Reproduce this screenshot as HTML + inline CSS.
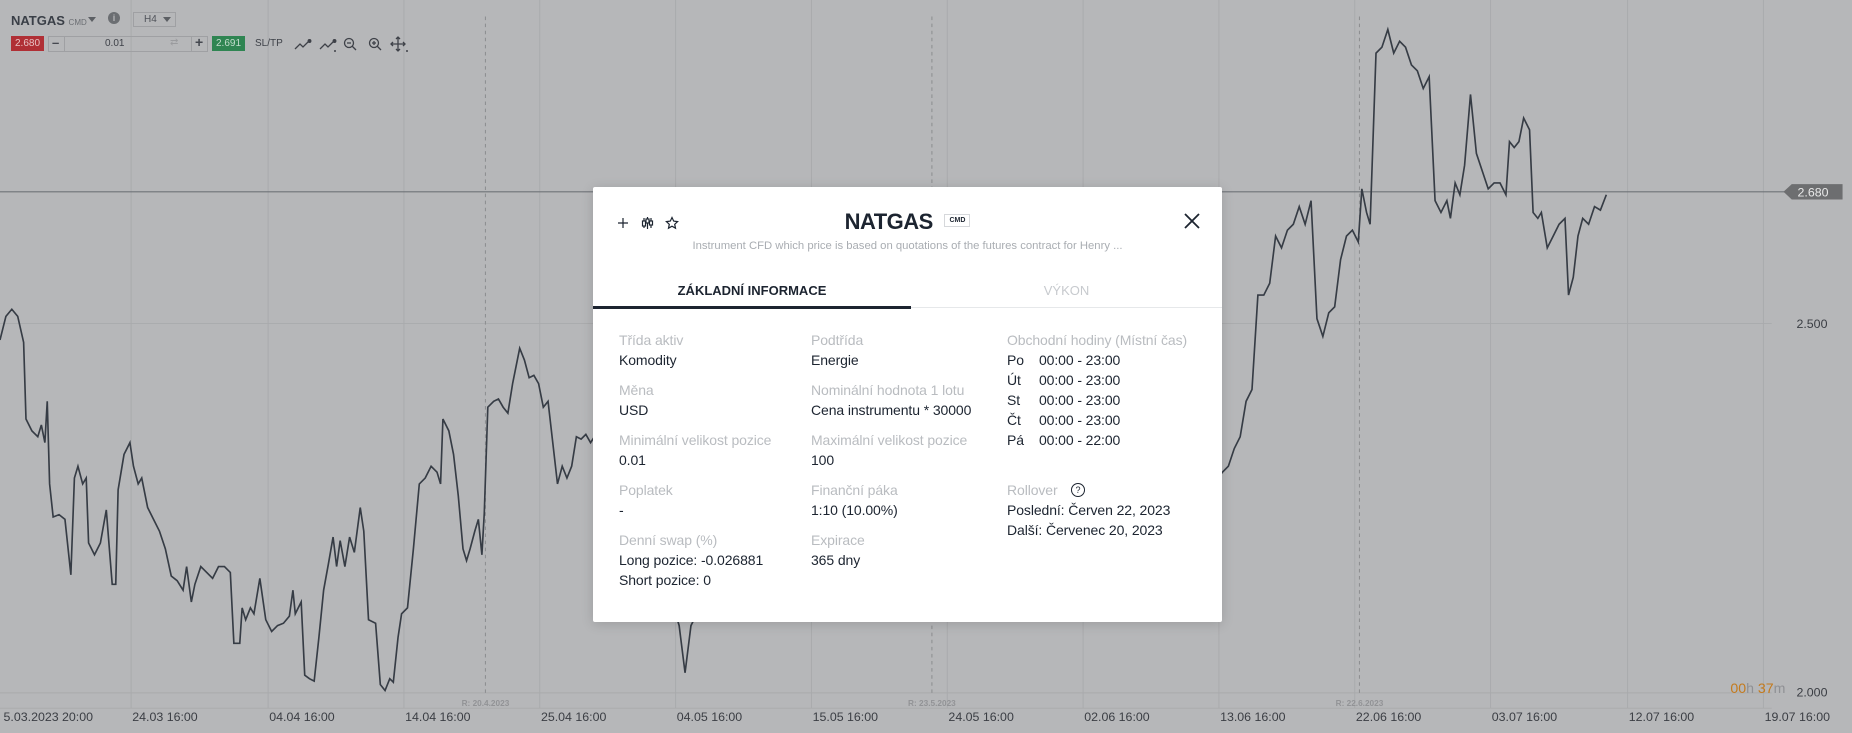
<!DOCTYPE html>
<html><head><meta charset="utf-8"><style>
*{margin:0;padding:0;box-sizing:border-box}
body{width:1852px;height:733px;overflow:hidden;background:#b6b7b9;font-family:"Liberation Sans",sans-serif;position:relative}
.abs{position:absolute}
.modal{position:absolute;left:593px;top:187px;width:629px;height:435px;background:#fff;border-radius:2px;box-shadow:0 2px 12px rgba(0,0,0,.15)}
.lbl{position:absolute;font-size:14px;color:#b9bcc0;white-space:nowrap;letter-spacing:-0.1px}
.val{position:absolute;font-size:14px;color:#1c2430;white-space:nowrap;letter-spacing:-0.1px}
</style></head><body>
<svg class="abs" style="left:0;top:0" width="1852" height="733" viewBox="0 0 1568 621" preserveAspectRatio="none">
<g stroke="#a9aaac" stroke-width="0.8">
<line x1="111" y1="0" x2="111" y2="600"/><line x1="227" y1="0" x2="227" y2="600"/><line x1="342" y1="0" x2="342" y2="600"/><line x1="457" y1="0" x2="457" y2="600"/><line x1="572" y1="0" x2="572" y2="600"/><line x1="687" y1="0" x2="687" y2="600"/><line x1="802" y1="0" x2="802" y2="600"/><line x1="917" y1="0" x2="917" y2="600"/><line x1="1032" y1="0" x2="1032" y2="600"/><line x1="1147" y1="0" x2="1147" y2="600"/><line x1="1262" y1="0" x2="1262" y2="600"/><line x1="1378" y1="0" x2="1378" y2="600"/><line x1="1493" y1="0" x2="1493" y2="600"/>
<line x1="0" y1="587" x2="1500" y2="587"/><line x1="0" y1="600" x2="1500" y2="600"/><line x1="0" y1="274" x2="1500" y2="274"/>
</g>
<g stroke="#8e8f91" stroke-width="0.9" stroke-dasharray="3,3">
<line x1="411" y1="14" x2="411" y2="590"/><line x1="789" y1="14" x2="789" y2="590"/><line x1="1151" y1="14" x2="1151" y2="590"/>
</g>
<line x1="0" y1="162.5" x2="1515" y2="162.5" stroke="#6f7378" stroke-width="0.9"/>
<polygon points="1510,162.5 1517,156 1560,156 1560,169 1517,169" fill="#6d6e70"/>
<text x="1535" y="166.5" font-size="10.5" fill="#e8e8e8" text-anchor="middle" font-family="Liberation Sans">2.680</text>
<polyline fill="none" stroke="#363c45" stroke-width="1.4" points="0,288 5,268 10,262 15,268 20,290 22,355 27,365 32,370 35,360 38,375 40,340 42,410 45,438 50,436 55,440 60,487 63,405 66,395 70,410 73,405 75,460 80,470 85,460 90,432 93,470 95,495 98,495 100,415 105,385 110,375 113,395 117,410 120,405 125,430 130,440 135,450 140,465 145,488 150,492 155,500 158,480 162,510 165,495 170,480 175,485 180,490 185,480 190,480 195,485 198,545 203,545 205,515 208,525 212,515 215,520 220,490 225,525 230,535 235,530 240,528 245,522 248,500 250,520 255,510 258,572 262,575 266,577 270,540 274,500 278,478 282,455 285,480 288,458 292,480 296,455 300,468 305,430 308,450 312,525 318,528 322,580 326,585 330,575 333,578 337,540 340,520 345,515 350,465 355,410 360,405 365,395 370,400 373,410 375,355 380,365 384,385 388,420 392,465 395,475 398,465 402,450 405,440 408,470 410,435 413,345 418,340 422,338 426,345 430,350 434,325 437,310 440,295 444,305 448,320 452,318 456,325 460,345 464,340 468,375 472,410 476,395 480,405 484,395 488,370 492,372 496,368 500,375 510,360 560,480 575,530 580,570 585,530 600,500"/>
<polyline fill="none" stroke="#363c45" stroke-width="1.4" points="1020,420 1035,400 1040,395 1045,380 1050,370 1055,340 1060,330 1065,250 1070,250 1075,240 1080,200 1085,210 1090,195 1095,190 1100,175 1105,190 1110,170 1115,270 1120,285 1125,265 1130,260 1135,220 1140,200 1145,195 1150,205 1153,160 1157,180 1160,190 1165,45 1170,40 1175,25 1180,45 1185,35 1190,40 1195,55 1200,60 1205,75 1210,65 1215,170 1220,180 1225,170 1228,185 1232,155 1236,165 1240,140 1245,80 1250,130 1255,145 1260,160 1265,155 1270,155 1275,165 1278,120 1282,125 1286,120 1290,100 1295,110 1298,180 1302,185 1305,180 1310,210 1315,200 1320,190 1325,185 1328,250 1332,235 1336,200 1340,185 1345,190 1350,175 1355,178 1360,165"/>
<g font-family="Liberation Sans" font-size="10.5" fill="#3b3e44">
<text x="3" y="611">5.03.2023 20:00</text><text x="112" y="611">24.03 16:00</text><text x="228" y="611">04.04 16:00</text><text x="343" y="611">14.04 16:00</text><text x="458" y="611">25.04 16:00</text><text x="573" y="611">04.05 16:00</text><text x="688" y="611">15.05 16:00</text><text x="803" y="611">24.05 16:00</text><text x="918" y="611">02.06 16:00</text><text x="1033" y="611">13.06 16:00</text><text x="1148" y="611">22.06 16:00</text><text x="1263" y="611">03.07 16:00</text><text x="1379" y="611">12.07 16:00</text><text x="1494" y="611">19.07 16:00</text>
<text x="1521" y="278">2.500</text><text x="1521" y="590">2.000</text>
</g>
<g font-family="Liberation Sans" font-size="7" fill="#929396" font-weight="bold" text-anchor="middle">
<text x="411" y="598">R: 20.4.2023</text><text x="789" y="598">R: 23.5.2023</text><text x="1151" y="598">R: 22.6.2023</text>
</g>
<text x="1465" y="587" font-family="Liberation Sans" font-size="12"><tspan fill="#c47a1c">00</tspan><tspan fill="#8f9094">h </tspan><tspan fill="#c47a1c">37</tspan><tspan fill="#8f9094">m</tspan></text>
</svg>

<div class="abs" style="left:11px;top:13px;font-size:13px;font-weight:bold;color:#3a3f47">NATGAS <span style="font-size:8px;font-weight:normal;color:#6b6e73">CMD</span></div>
<div class="abs" style="left:88px;top:17px;width:0;height:0;border-left:4px solid transparent;border-right:4px solid transparent;border-top:5px solid #5c5f64"></div>
<div class="abs" style="left:108px;top:12px;width:12px;height:12px;border-radius:50%;background:#6b6e72;color:#b6b7b9;font-size:9px;font-weight:bold;text-align:center;line-height:12px">i</div>
<div class="abs" style="left:133px;top:12px;width:43px;height:15px;border:1px solid #9fa0a3;font-size:10px;color:#50535a;padding-left:10px;line-height:13px">H4</div>
<div class="abs" style="left:163px;top:17px;width:0;height:0;border-left:4px solid transparent;border-right:4px solid transparent;border-top:5px solid #5c5f64"></div>
<div class="abs" style="left:11px;top:36px;width:33px;height:15px;background:#b02f35;color:#e8c3c5;font-size:10px;text-align:center;line-height:15px">2.680</div>
<div class="abs" style="left:48px;top:36px;width:160px;height:16px;border:1px solid #9fa0a3"></div>
<div class="abs" style="left:64px;top:36px;width:1px;height:16px;background:#9fa0a3"></div>
<div class="abs" style="left:191px;top:36px;width:1px;height:16px;background:#9fa0a3"></div>
<div class="abs" style="left:52px;top:35px;font-size:13px;font-weight:bold;color:#454850">–</div>
<div class="abs" style="left:195px;top:34px;font-size:14px;font-weight:bold;color:#454850">+</div>
<div class="abs" style="left:105px;top:38px;font-size:10px;color:#3e4148">0.01</div>
<div class="abs" style="left:170px;top:37px;font-size:10px;color:#9a9b9e">⇄</div>
<div class="abs" style="left:212px;top:36px;width:33px;height:15px;background:#2f8552;color:#c3dccd;font-size:10px;text-align:center;line-height:15px">2.691</div>
<div class="abs" style="left:255px;top:38px;font-size:10px;color:#3e4148">SL/TP</div>
<svg class="abs" style="left:292px;top:36px" width="120" height="18" viewBox="0 0 120 18" fill="none" stroke="#3e4148" stroke-width="1.3">
<path d="M3 13 L8 8 L11 11 L17 5"/><circle cx="17.5" cy="5" r="1.3" fill="#3e4148"/>
<path d="M28 13 L33 8 L36 11 L42 5"/><circle cx="42.5" cy="5" r="1.3" fill="#3e4148"/><path d="M42 15 h2" stroke-width="1.5"/>
<circle cx="57" cy="7" r="4.5"/><path d="M60 10 L64 14 M55 7 h4"/>
<circle cx="82" cy="7" r="4.5"/><path d="M85 10 L89 14 M80 7 h4 M82 5 v4"/>
<path d="M106 1 v14 M99 8 h14 M104 3 l2-2 2 2 M104 13 l2 2 2-2 M101 6 l-2 2 2 2 M111 6 l2 2-2 2"/><path d="M114 15 h2" stroke-width="1.5"/>
</svg>

<div class="modal">
<svg class="abs" style="left:24px;top:28px" width="70" height="16" viewBox="0 0 70 16" fill="none" stroke="#1c2430" stroke-width="1.2">
<path d="M6 3 v10 M1 8 h10"/>
<path d="M27 3 v10 M34 3 v10 M30.5 2 v12"/><rect x="25.5" y="6" width="3" height="5" fill="#fff"/><rect x="32.5" y="6" width="3" height="4" fill="#fff"/><rect x="29" y="4" width="3" height="4" fill="#fff"/>
<path d="M55 2.5 l1.7 3.6 3.9.5-2.9 2.7.8 3.9-3.5-2-3.5 2 .8-3.9-2.9-2.7 3.9-.5z"/>
</svg>
<div class="abs" style="left:0;width:629px;top:22px;text-align:center;font-size:22px;font-weight:bold;color:#1c2430;letter-spacing:-0.5px">NATGAS <span style="display:inline-block;vertical-align:middle;font-size:7px;font-weight:bold;border:1px solid #d6d8db;padding:2px 4px;margin-left:6px;position:relative;top:-3px;letter-spacing:0">CMD</span></div>
<div class="abs" style="left:0;width:629px;top:53px;text-align:center;font-size:11.3px;color:#a9adb2">Instrument CFD which price is based on quotations of the futures contract for Henry ...</div>
<svg class="abs" style="left:590px;top:25px" width="18" height="18" viewBox="0 0 18 18" stroke="#1c2430" stroke-width="1.8"><path d="M2 2 L16 16 M16 2 L2 16"/></svg>
<div class="abs" style="left:0;width:318px;top:96px;text-align:center;font-size:13px;font-weight:bold;color:#1c2430">ZÁKLADNÍ INFORMACE</div>
<div class="abs" style="left:318px;width:311px;top:96px;text-align:center;font-size:13px;color:#c7cace">VÝKON</div>
<div class="abs" style="left:0;top:120px;width:629px;height:1px;background:#e6e8ea"></div>
<div class="abs" style="left:0;top:119px;width:318px;height:3px;background:#1c2430"></div>

<div class="lbl" style="left:26px;top:145px">Třída aktiv</div><div class="val" style="left:26px;top:165px">Komodity</div>
<div class="lbl" style="left:26px;top:195px">Měna</div><div class="val" style="left:26px;top:215px">USD</div>
<div class="lbl" style="left:26px;top:245px">Minimální velikost pozice</div><div class="val" style="left:26px;top:265px">0.01</div>
<div class="lbl" style="left:26px;top:295px">Poplatek</div><div class="val" style="left:26px;top:315px">-</div>
<div class="lbl" style="left:26px;top:345px">Denní swap (%)</div><div class="val" style="left:26px;top:365px">Long pozice: -0.026881</div><div class="val" style="left:26px;top:385px">Short pozice: 0</div>

<div class="lbl" style="left:218px;top:145px">Podtřída</div><div class="val" style="left:218px;top:165px">Energie</div>
<div class="lbl" style="left:218px;top:195px">Nominální hodnota 1 lotu</div><div class="val" style="left:218px;top:215px">Cena instrumentu * 30000</div>
<div class="lbl" style="left:218px;top:245px">Maximální velikost pozice</div><div class="val" style="left:218px;top:265px">100</div>
<div class="lbl" style="left:218px;top:295px">Finanční páka</div><div class="val" style="left:218px;top:315px">1:10 (10.00%)</div>
<div class="lbl" style="left:218px;top:345px">Expirace</div><div class="val" style="left:218px;top:365px">365 dny</div>

<div class="lbl" style="left:414px;top:145px">Obchodní hodiny (Místní čas)</div>
<div class="val" style="left:414px;top:165px">Po</div><div class="val" style="left:446px;top:165px">00:00 - 23:00</div>
<div class="val" style="left:414px;top:185px">Út</div><div class="val" style="left:446px;top:185px">00:00 - 23:00</div>
<div class="val" style="left:414px;top:205px">St</div><div class="val" style="left:446px;top:205px">00:00 - 23:00</div>
<div class="val" style="left:414px;top:225px">Čt</div><div class="val" style="left:446px;top:225px">00:00 - 23:00</div>
<div class="val" style="left:414px;top:245px">Pá</div><div class="val" style="left:446px;top:245px">00:00 - 22:00</div>
<div class="lbl" style="left:414px;top:295px">Rollover</div>
<div class="abs" style="left:478px;top:296px;width:14px;height:14px;border:1.3px solid #1c2430;border-radius:50%;font-size:9px;text-align:center;line-height:12px;color:#1c2430">?</div>
<div class="val" style="left:414px;top:315px">Poslední: Červen 22, 2023</div>
<div class="val" style="left:414px;top:335px">Další: Červenec 20, 2023</div>
</div>
</body></html>
